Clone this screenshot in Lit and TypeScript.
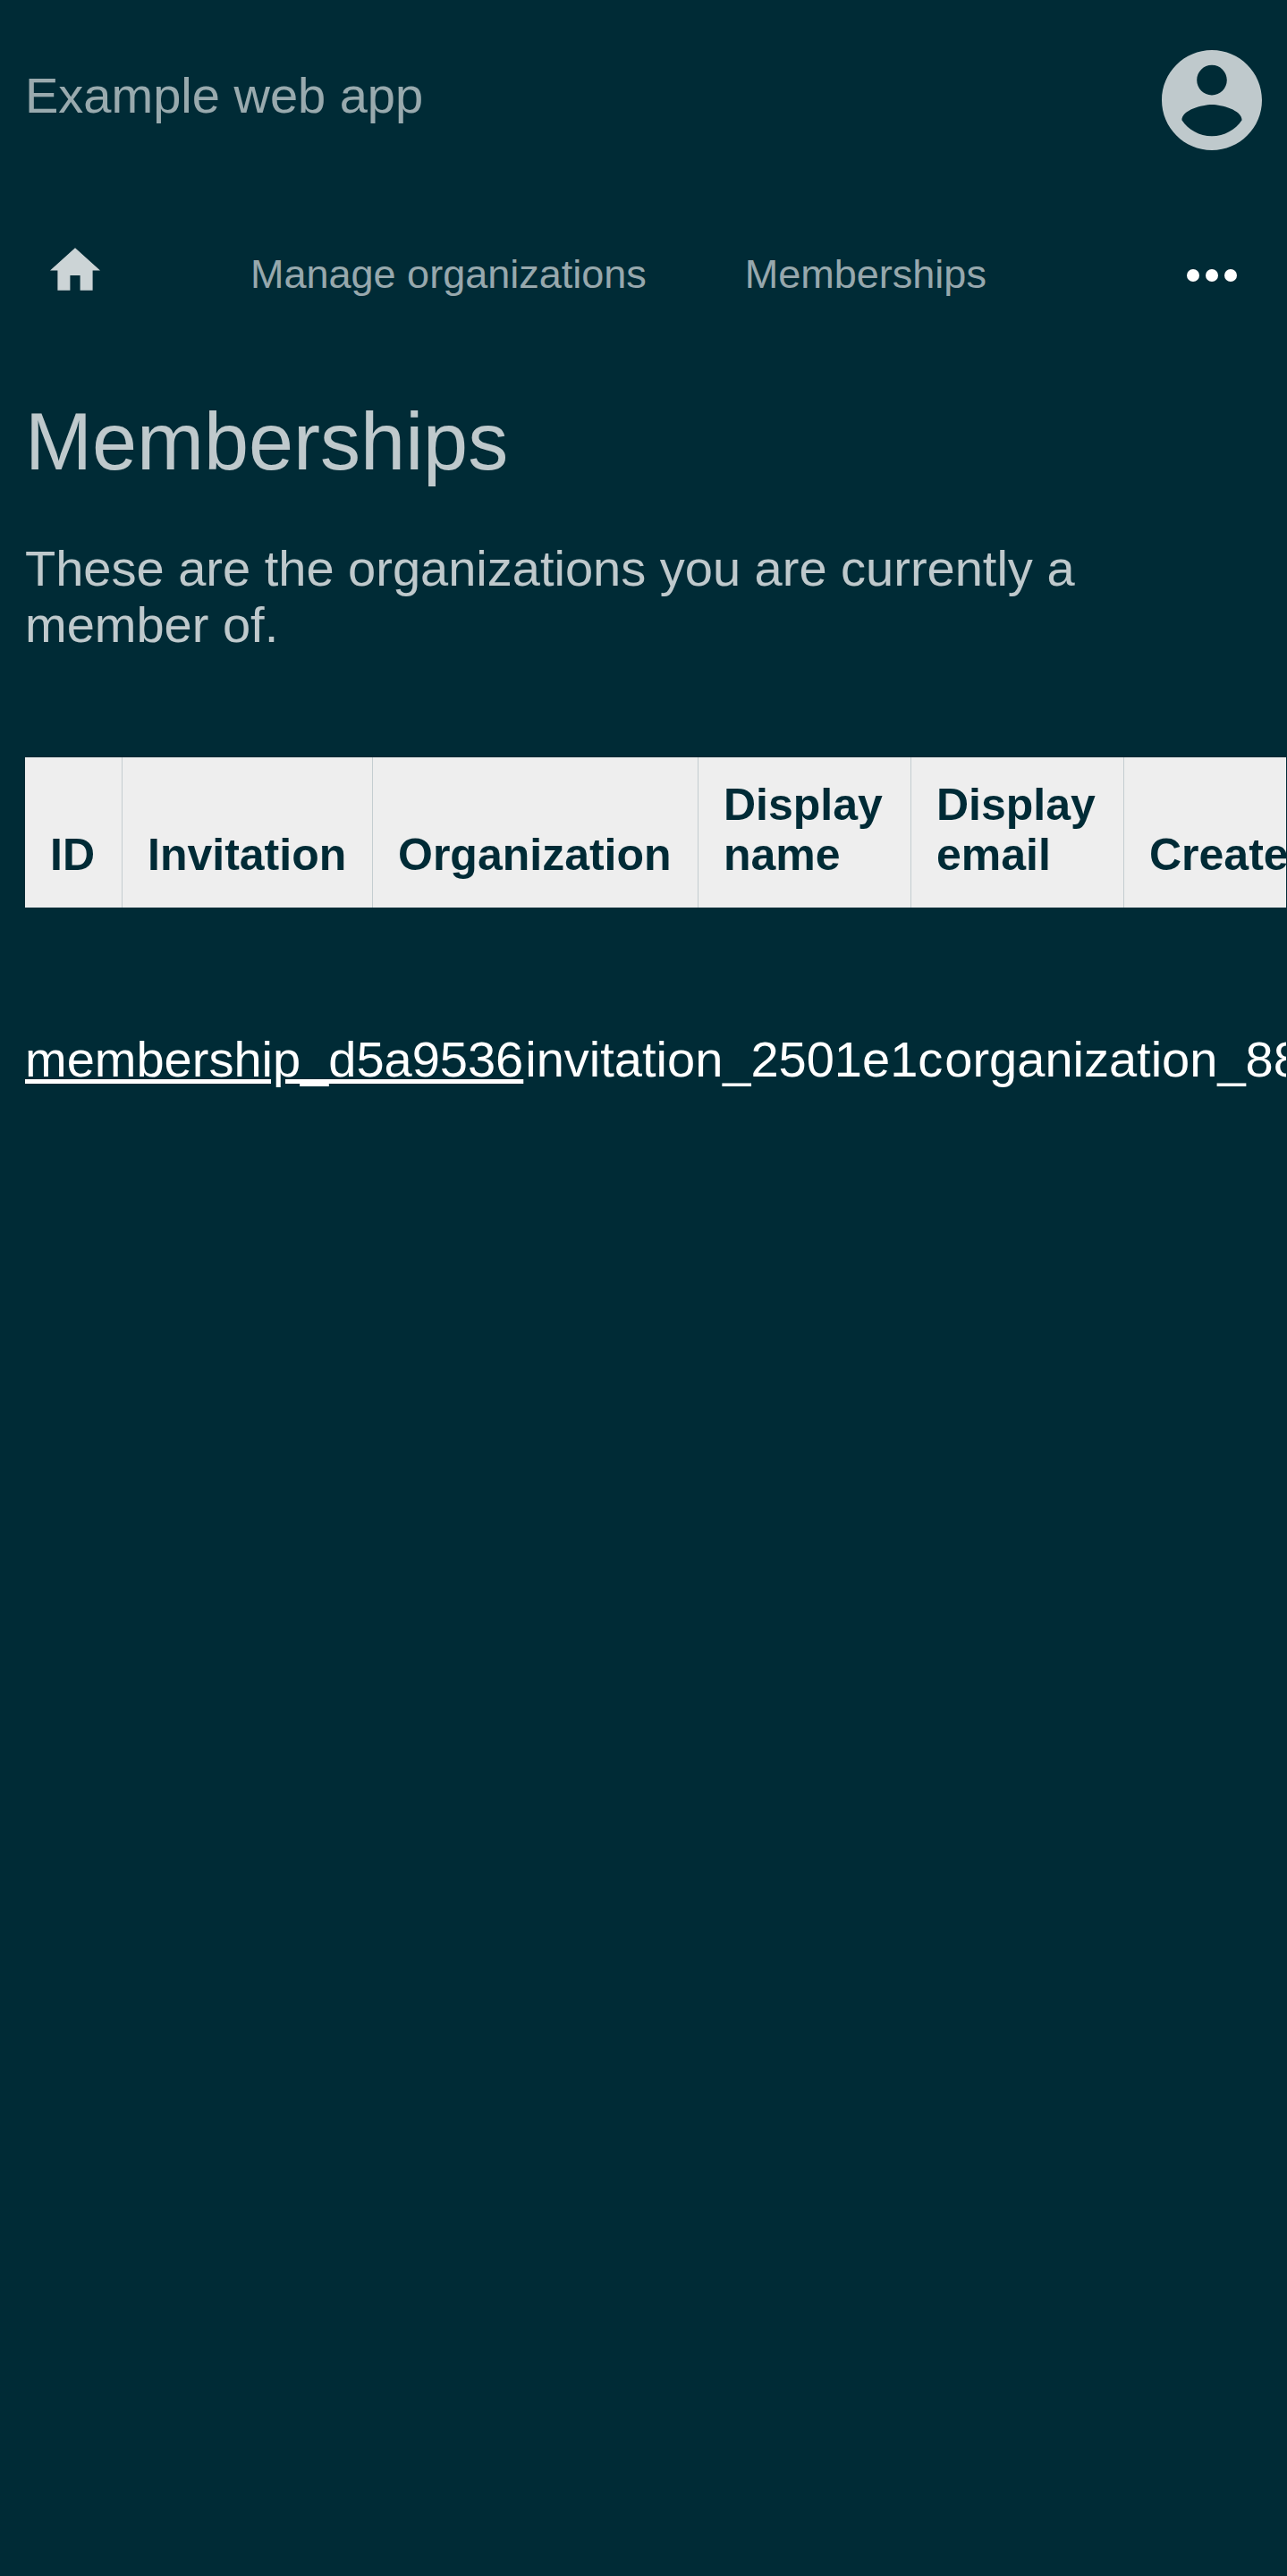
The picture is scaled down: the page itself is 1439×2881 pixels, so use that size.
import { LitElement, html, css } from "lit";
import { customElement } from "lit/decorators.js";

interface Column {
  label: string;
  size: string;
}

const columns: Column[] = [
  { label: "ID", size: "xs" },
  { label: "Invitation", size: "md" },
  { label: "Organization", size: "lg" },
  { label: "Display name", size: "sm" },
  { label: "Display email", size: "sm" },
  { label: "Created", size: "sm" },
];

const memberships = [
  {
    id: "membership_d5a9536",
    invitation: "invitation_2501e1c",
    organization: "organization_88",
  },
];

@customElement("app-root")
export class AppRoot extends LitElement {
  static styles = css`
    :host {
      display: block;
      min-height: 100vh;
      overflow-x: hidden;
      background: #002b36;
      color: #fff;
      font-family: "Liberation Sans", Arial, sans-serif;
      font-size: 56px;
      line-height: 63px;
    }
    a {
      color: inherit;
      text-decoration: none;
    }
    svg {
      display: block;
      fill: currentColor;
    }
    .header {
      display: flex;
      align-items: center;
      justify-content: space-between;
      padding: 56px 28px 28px;
    }
    .brand {
      padding-bottom: 12px;
      color: rgba(255, 255, 255, 0.6);
    }
    .account {
      color: rgba(255, 255, 255, 0.75);
    }
    .account svg {
      width: 112px;
      height: 112px;
    }
    .nav {
      display: flex;
      align-items: center;
      padding: 81px 56px 51px;
      font-size: 45px;
      line-height: 50px;
    }
    .home {
      margin-right: 168px;
      padding-bottom: 10px;
      color: rgba(255, 255, 255, 0.8);
    }
    .home svg {
      width: 56px;
      height: 48px;
    }
    .links {
      display: flex;
      flex: 1;
      gap: 110px;
      padding-top: 2px;
      color: rgba(255, 255, 255, 0.6);
    }
    .more {
      padding: 4px 0 0;
      border: 0;
      background: none;
      color: #fff;
    }
    .more svg {
      width: 56px;
      height: 14px;
    }
    .intro {
      padding: 56px 28px 0;
      color: rgba(255, 255, 255, 0.75);
    }
    .title {
      margin: 0 0 58px;
      font-size: 90px;
      font-weight: 400;
      line-height: 104px;
    }
    .lead {
      margin: 0;
    }
    .scroller {
      margin: 117px 1px 0 28px;
      overflow: hidden;
    }
    .table,
    .body {
      display: block;
    }
    .head {
      display: block;
      width: max-content;
      margin-bottom: 138px;
      background: #eee;
      color: #002b36;
      font-size: 50px;
      line-height: 56px;
    }
    .row {
      display: flex;
    }
    .body .row {
      gap: 2px;
    }
    .heading {
      display: flex;
      flex: none;
      align-items: flex-end;
      box-sizing: border-box;
      padding: 25px 28px 31px;
      border-right: 1px solid #c4cdd0;
      text-align: left;
    }
    .xs {
      width: 109px;
    }
    .sm {
      width: 238px;
    }
    .md {
      width: 280px;
    }
    .lg {
      width: 364px;
    }
    .cell {
      flex: none;
      padding: 0;
    }
    .record {
      text-decoration: underline;
    }
  `;

  render() {
    return html`
      <header class="header">
        <a class="brand" href="#home">Example web app</a>
        <a class="account" href="#account" aria-label="Account">
          <svg viewBox="2 2 20 20" aria-hidden="true">
            <path
              d="M12 2C6.48 2 2 6.48 2 12s4.48 10 10 10 10-4.48 10-10S17.52 2 12 2zm0 3c1.66 0 3 1.34 3 3s-1.34 3-3 3-3-1.34-3-3 1.34-3 3-3zm0 14.2c-2.5 0-4.71-1.28-6-3.22.03-1.99 4-3.08 6-3.08 1.99 0 5.97 1.09 6 3.08-1.29 1.94-3.5 3.22-6 3.22z"
            />
          </svg>
        </a>
      </header>
      <nav class="nav">
        <a class="home" href="#home" aria-label="Home">
          <svg viewBox="2 3 20 17" aria-hidden="true">
            <path d="M10 20v-6h4v6h5v-8h3L12 3 2 12h3v8z" />
          </svg>
        </a>
        <div class="links">
          <a href="#organizations">Manage organizations</a>
          <a href="#memberships">Memberships</a>
        </div>
        <button class="more" type="button" aria-label="More">
          <svg viewBox="4 10 16 4" aria-hidden="true">
            <circle cx="6" cy="12" r="2" />
            <circle cx="12" cy="12" r="2" />
            <circle cx="18" cy="12" r="2" />
          </svg>
        </button>
      </nav>
      <main>
        <section class="intro">
          <h1 class="title">Memberships</h1>
          <p class="lead">
            These are the organizations you are currently a member of.
          </p>
        </section>
        <div class="scroller">
          <table class="table">
            <thead class="head">
              <tr class="row">
                ${columns.map(
                  (c) =>
                    html`<th class="heading ${c.size}" scope="col">${c.label}</th>`
                )}
              </tr>
            </thead>
            <tbody class="body">
              ${memberships.map(
                (m) => html`<tr class="row">
                  <td class="cell"><a class="record" href="#${m.id}">${m.id}</a></td>
                  <td class="cell">${m.invitation}</td>
                  <td class="cell">${m.organization}</td>
                </tr>`
              )}
            </tbody>
          </table>
        </div>
      </main>
    `;
  }
}
